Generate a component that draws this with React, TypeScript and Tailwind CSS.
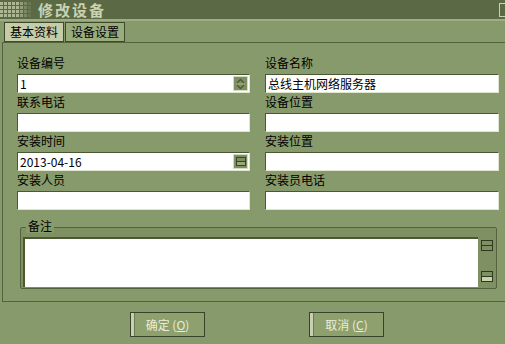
import React from "react";

const font = { fontFamily: '"SimSun", "Noto Sans CJK SC", sans-serif' };

function Dots() {
  const cells = [];
  for (let r = 0; r < 4; r++) {
    for (let c = 0; c < 8; c++) {
      const op = c < 5 ? 0.75 : c === 5 ? 0.5 : c === 6 ? 0.3 : 0.15;
      cells.push(<rect key={`${r}-${c}`} x={c * 4} y={2 + r * 4} width={3} height={3} fill="#c9d2ae" opacity={op} />);
    }
  }
  return (
    <svg width="34" height="19" className="shrink-0">
      {cells}
    </svg>
  );
}

function Field({ label, value, addon }: { label: string; value?: string; addon?: React.ReactNode }) {
  return (
    <div className="flex flex-col">
      <div className="h-[14px] text-[12px] leading-[14px] text-black mb-[4px]">{label}</div>
      <div className="relative h-[19px] bg-white border border-[#4b5834] border-r-[#dfe6cf] border-b-[#dfe6cf] flex items-center px-[2px] text-[12px] text-black">
        {value}
        {addon}
      </div>
    </div>
  );
}

function Spinner() {
  return (
    <div className="absolute right-[1px] top-[1px] w-[15px] h-[15px] bg-[#7e8f62] border border-[#d6dcc4] flex flex-col items-center justify-center">
      <svg width="11" height="12" viewBox="0 0 11 12">
        <path d="M2 5 L5.5 1.5 L9 5" fill="none" stroke="#4b5834" strokeWidth="1.3" />
        <line x1="1" y1="6" x2="10" y2="6" stroke="#a6b38a" />
        <path d="M2 7 L5.5 10.5 L9 7" fill="none" stroke="#4b5834" strokeWidth="1.3" />
      </svg>
    </div>
  );
}

function DateBtn() {
  return (
    <div className="absolute right-[1px] top-[1px] w-[15px] h-[15px] bg-[#7e8f62] border border-[#d6dcc4] flex items-center justify-center">
      <div className="w-[10px] h-[9px] border border-[#39432a] flex flex-col">
        <div className="flex-1 border-b border-[#39432a]" />
        <div className="flex-1 bg-[#9aa97d]" />
      </div>
    </div>
  );
}

function Button({ label }: { label: React.ReactNode }) {
  return (
    <div className="w-[75px] h-[25px] flex border border-[#39432a] bg-[#8ea06e]">
      <div className="w-[4px] bg-[#c9cfb4] border-r border-[#6b7a52]" />
      <div className="flex-1 flex items-center justify-center text-[12px] text-[#e9edda] pr-[4px]">{label}</div>
    </div>
  );
}

export default function App() {
  return (
    <div className="w-[505px] h-[344px] bg-[#879a6b] overflow-hidden flex flex-col" style={font}>
      <div className="h-[19px] bg-[#5b6a44] flex items-center shrink-0">
        <Dots />
        <div className="ml-[4px] text-[15px] font-bold text-[#c9d2b2] leading-[17px] tracking-[2px]">修改设备</div>
        <div className="ml-auto w-[6px] h-[14px] border border-[#c9d2b2] border-r-0" />
      </div>
      <div className="h-[2px] bg-[#9fae82]" />
      <div className="flex pl-[4px] pt-[1px] h-[21px] items-end">
        <div className="h-[20px] px-[5px] bg-[#c5cca9] border border-[#3e4a2b] text-[12px] leading-[18px] text-black">基本资料</div>
        <div className="ml-[1px] h-[20px] px-[5px] bg-[#9aab7c] border border-[#3e4a2b] text-[12px] leading-[18px] text-black">设备设置</div>
      </div>
      <div className="ml-[2px] h-[260px] border-l border-t border-b border-[#55633d] pt-[13px] pl-[14px] pr-[6px] flex flex-col">
        <div className="grid grid-cols-[233px_234px] gap-x-[15px] gap-y-[2px]">
          <Field label="设备编号" value="1" addon={<Spinner />} />
          <Field label="设备名称" value="总线主机网络服务器" />
          <Field label="联系电话" />
          <Field label="设备位置" />
          <Field label="安装时间" value="2013-04-16" addon={<DateBtn />} />
          <Field label="安装位置" />
          <Field label="安装人员" />
          <Field label="安装员电话" />
        </div>
        <div className="relative mt-[17px] ml-[3px] w-[477px] h-[62px] border border-[#55633d] rounded-[2px] bg-[#7f9163] flex pl-[2px] pt-[9px] pb-[1px]">
          <div className="absolute left-[5px] top-[-9px] px-[2px] bg-[#879a6b] text-[12px] leading-[14px] text-black">备注</div>
          <div className="flex-1 bg-white border-l-2 border-t-2 border-[#4b5834]" />
          <div className="w-[18px] flex flex-col items-center justify-between pt-[3px] pb-[5px]">
            <div className="w-[12px] h-[11px] border border-[#2f3820] flex flex-col">
              <div className="flex-1 border-b border-[#2f3820]" />
              <div className="flex-1" />
            </div>
            <div className="w-[12px] h-[11px] border border-[#2f3820] flex flex-col">
              <div className="flex-1 border-b border-[#2f3820]" />
              <div className="flex-1 bg-[#c9d2ae]" />
            </div>
          </div>
        </div>
      </div>
      <div className="flex pl-[130px] gap-[104px] mt-[10px]">
        <Button label={<span>确定 (<u>O</u>)</span>} />
        <Button label={<span>取消 (<u>C</u>)</span>} />
      </div>
    </div>
  );
}
